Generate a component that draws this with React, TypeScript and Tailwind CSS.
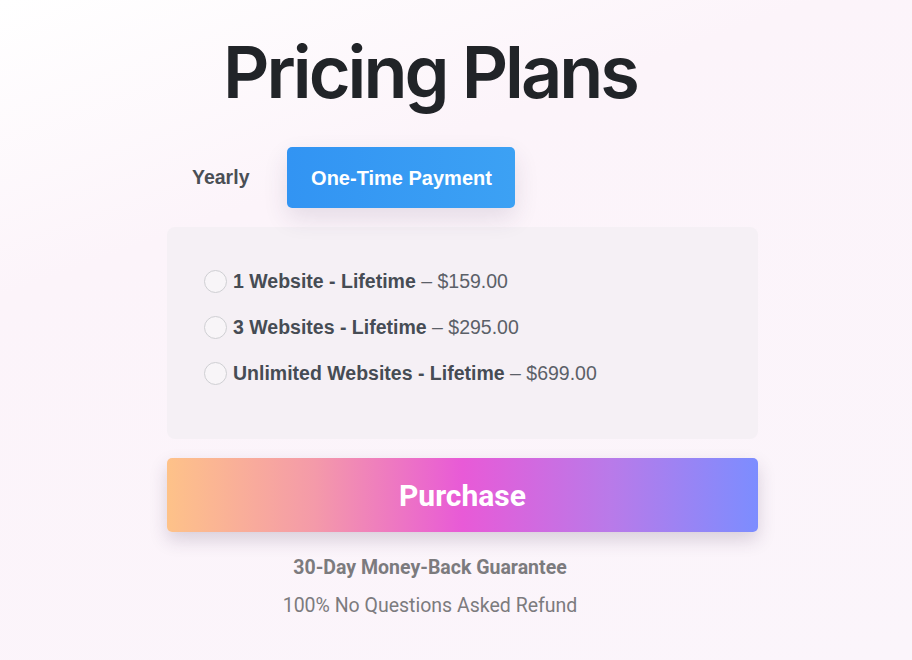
export default function App() {
  const plans = [
    { name: "1 Website - Lifetime", price: "$159.00" },
    { name: "3 Websites - Lifetime", price: "$295.00" },
    { name: "Unlimited Websites - Lifetime", price: "$699.00" },
  ];

  return (
    <div className="min-h-[660px] w-[912px] bg-[linear-gradient(160deg,#ffffff_0%,#fcf4fa_30%,#fbf5fb_100%)] font-['Liberation_Sans',Arial,sans-serif]">
      <div className="ml-[167px] w-[591px] pt-[22px]">
        <h1 className="w-[526px] text-center font-['Inter',sans-serif] text-[72px] font-semibold leading-[100px] tracking-[-3px] text-[#212428]">
          Pricing Plans
        </h1>

        <div className="mt-[25px] flex h-[61px] items-center">
          <button className="ml-[25px] px-0 text-[19.5px] font-bold text-[#4a4f55]">
            Yearly
          </button>
          <button className="ml-[38px] h-[61px] w-[228px] rounded-[5px] bg-[linear-gradient(90deg,#3294f3,#3ca1f4)] text-[20px] font-bold text-white shadow-[0_10px_25px_rgba(60,40,80,0.12)]">
            One-Time Payment
          </button>
        </div>

        <div className="mt-[19px] h-[212px] rounded-[8px] bg-[#f5f0f5] px-[37px] pt-[43px]">
          <div className="flex flex-col gap-[23px]">
            {plans.map((p) => (
              <label key={p.name} className="flex h-[23px] items-center text-[19.5px]">
                <span className="mr-[6px] h-[23px] w-[23px] shrink-0 rounded-full border border-[#cfcfd3] bg-[#f8f5f8]" />
                <span className="font-bold text-[#464c54]">{p.name}</span>
                <span className="text-[#5b6068]">&nbsp;– {p.price}</span>
              </label>
            ))}
          </div>
        </div>

        <button className="mt-[19px] flex h-[74px] w-[591px] items-center justify-center rounded-[5px] bg-[linear-gradient(90deg,#fec289_0%,#f49aa9_25%,#e85ad7_50%,#b97ae9_75%,#7c8dff_100%)] font-['Roboto',sans-serif] text-[30px] font-bold text-white shadow-[0_8px_18px_rgba(60,40,80,0.18)]">
          Purchase
        </button>

        <div className="w-[526px] pt-[22px] text-center font-['Roboto',sans-serif] text-[19.5px] text-[#7c7b7e]">
          <p className="font-bold leading-[28px]">30-Day Money-Back Guarantee</p>
          <p className="mt-[10px] leading-[28px]">100% No Questions Asked Refund</p>
        </div>
      </div>
    </div>
  );
}
